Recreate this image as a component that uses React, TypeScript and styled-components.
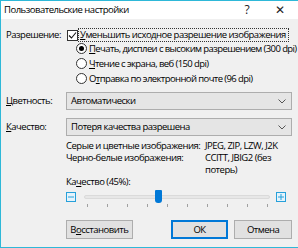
import React from "react";
import styled, { createGlobalStyle } from "styled-components";

const Global = createGlobalStyle`
  html, body { margin: 0; padding: 0; background: #ffffff; }
  body {
    font-family: "Open Sans", "Noto Sans", sans-serif;
    font-size: 9.5px;
    letter-spacing: -0.5px;
    line-height: 12px;
    color: #000;
  }
`;

const Dialog = styled.div`
  width: 298px;
  height: 248px;
  box-sizing: border-box;
  border: 1px solid #2eb8d8;
  border-right: none;
  background: #f0f0f0;
  display: flex;
  flex-direction: column;
  overflow: hidden;
`;

const TitleBar = styled.div`
  height: 18px;
  background: #ffffff;
  display: flex;
  align-items: center;
  padding-left: 3px;
  flex-shrink: 0;
`;

const Title = styled.span`
  flex: 1;
  white-space: nowrap;
`;

const TitleBtn = styled.span<{ $w: number }>`
  width: ${(p) => p.$w}px;
  text-align: center;
  font-size: 12px;
  letter-spacing: 0;
  color: #222;
`;

const Body = styled.div`
  flex: 1;
  padding: 10px 6px 0 5px;
  display: grid;
  grid-template-columns: 60px minmax(0, 1fr);
  align-content: start;
`;

const Label = styled.div<{ $top?: number }>`
  padding-top: ${(p) => p.$top ?? 0}px;
  white-space: nowrap;
`;

const Col = styled.div<{ $mb?: number }>`
  display: flex;
  flex-direction: column;
  min-width: 0;
  margin-bottom: ${(p) => p.$mb ?? 0}px;
`;

const CheckRow = styled.div`
  display: flex;
  align-items: center;
  gap: 1px;
  height: 12px;
  padding-left: 1px;
`;

const Box = styled.span`
  width: 9px;
  height: 9px;
  border: 1px solid #333;
  background: #fff;
  display: flex;
  align-items: center;
  justify-content: center;
  flex-shrink: 0;
`;

const Focus = styled.span`
  outline: 1px dotted #333;
  padding: 0 2px 0 1px;
  height: 12px;
  white-space: nowrap;
`;

const RadioRow = styled.div`
  display: flex;
  align-items: center;
  gap: 2px;
  padding-left: 10px;
  height: 15px;
  white-space: nowrap;
  letter-spacing: -0.6px;
`;

const Radio = styled.span<{ $on?: boolean }>`
  width: 9px;
  height: 9px;
  border-radius: 50%;
  border: 1px solid #333;
  background: #fff;
  display: flex;
  align-items: center;
  justify-content: center;
  flex-shrink: 0;
  &::after {
    content: "";
    width: 5px;
    height: 5px;
    border-radius: 50%;
    background: ${(p) => (p.$on ? "#000" : "transparent")};
  }
`;

const Select = styled.div`
  height: 18px;
  box-sizing: border-box;
  border: 1px solid #adadad;
  background: #e5e5e5;
  display: flex;
  align-items: center;
  padding: 0 5px 0 4px;
  justify-content: space-between;
`;

const U = styled.span`
  text-decoration: underline;
  text-underline-offset: 1px;
`;

const Info = styled.div`
  display: grid;
  grid-template-columns: 139px 1fr;
  margin-top: 4px;
  & > span:nth-child(odd) { white-space: nowrap; }
`;

const SliderRow = styled.div`
  display: flex;
  align-items: center;
  height: 12px;
  margin-top: 3px;
`;

const StepBtn = styled.span`
  width: 8px;
  height: 8px;
  border: 1px solid #26a0da;
  background: #e5f3fb;
  display: flex;
  align-items: center;
  justify-content: center;
  flex-shrink: 0;
`;

const Track = styled.div`
  position: relative;
  margin: 0 6px 0 8px;
  width: 186px;
  height: 4px;
  border-radius: 2px;
  background: #e7e7e7;
  border: 1px solid #dadada;
  box-sizing: border-box;
`;

const Thumb = styled.span`
  position: absolute;
  top: -6px;
  width: 7px;
  height: 13px;
  background: #0078d7;
  border-radius: 1px 1px 3px 3px;
`;

const Ticks = styled.div`
  display: flex;
  gap: 19px;
  padding-left: 21px;
  margin-top: 1px;
  height: 3px;
`;

const Tick = styled.span`
  width: 1px;
  height: 3px;
  background: #a0a0a0;
`;

const Buttons = styled.div`
  grid-column: 2;
  display: flex;
  margin-top: 13px;
`;

const Btn = styled.div<{ $w: number; $default?: boolean; $ml?: number }>`
  width: ${(p) => p.$w}px;
  height: 19px;
  margin-left: ${(p) => p.$ml ?? 0}px;
  box-sizing: border-box;
  background: #e1e1e1;
  border: ${(p) => (p.$default ? "2px solid #0078d7" : "1px solid #adadad")};
  display: flex;
  align-items: center;
  justify-content: center;
`;

const Chevron = () => (
  <svg width="8" height="5" viewBox="0 0 8 5">
    <path d="M0.5 0.5 L4 4 L7.5 0.5" fill="none" stroke="#555" strokeWidth="1" />
  </svg>
);

const ticks = Array.from({ length: 10 });
const thumbPx = 70;

export default function App() {
  return (
    <>
      <Global />
      <Dialog>
        <TitleBar>
          <Title>Пользовательские настройки</Title>
          <TitleBtn $w={30}>?</TitleBtn>
          <TitleBtn $w={36}>✕</TitleBtn>
        </TitleBar>
        <Body>
          <Label>Разрешение:</Label>
          <Col $mb={6}>
            <CheckRow>
              <Box>
                <svg width="9" height="9" viewBox="0 0 9 9">
                  <path d="M1 4.5 L3.5 7 L8 1.5" fill="none" stroke="#111" strokeWidth="1.1" />
                </svg>
              </Box>
              <Focus>
                <U>У</U>меньшить исходное разрешение изображения
              </Focus>
            </CheckRow>
            <RadioRow>
              <Radio $on />
              <span>
                <U>П</U>ечать, дисплеи с высоким разрешением (300 dpi)
              </span>
            </RadioRow>
            <RadioRow>
              <Radio />
              <span>
                <U>Ч</U>тение с экрана, веб (150 dpi)
              </span>
            </RadioRow>
            <RadioRow>
              <Radio />
              <span>
                О<U>т</U>правка по электронной почте (96 dpi)
              </span>
            </RadioRow>
          </Col>

          <Label $top={3}>
            <U>Ц</U>ветность:
          </Label>
          <Col $mb={8}>
            <Select>
              <span>Автоматически</span>
              <Chevron />
            </Select>
          </Col>

          <Label $top={3}>
            <U>К</U>ачество:
          </Label>
          <Col>
            <Select>
              <span>Потеря качества разрешена</span>
              <Chevron />
            </Select>
            <Info>
              <span>Серые и цветные изображения:</span>
              <span>JPEG, ZIP, LZW, J2K</span>
              <span>Черно-белые изображения:</span>
              <span>
                CCITT, JBIG2 (без
                <br />
                потерь)
              </span>
            </Info>
            <div>
              Ка<U>ч</U>ество (45%):
            </div>
            <SliderRow>
              <StepBtn>
                <svg width="6" height="6" viewBox="0 0 6 6">
                  <path d="M0 3 H6" stroke="#26a0da" strokeWidth="1" />
                </svg>
              </StepBtn>
              <Track>
                <Thumb style={{ left: `${thumbPx}px` }} />
              </Track>
              <StepBtn>
                <svg width="6" height="6" viewBox="0 0 6 6">
                  <path d="M0 3 H6 M3 0 V6" stroke="#26a0da" strokeWidth="1" />
                </svg>
              </StepBtn>
            </SliderRow>
            <Ticks>
              {ticks.map((_, i) => (
                <Tick key={i} />
              ))}
            </Ticks>
          </Col>

          <Buttons>
            <Btn $w={67}>
              <span>
                В<U>о</U>сстановить
              </span>
            </Btn>
            <Btn $w={58} $default $ml={38}>
              ОК
            </Btn>
            <Btn $w={58} $ml={6}>
              Отмена
            </Btn>
          </Buttons>
        </Body>
      </Dialog>
    </>
  );
}
